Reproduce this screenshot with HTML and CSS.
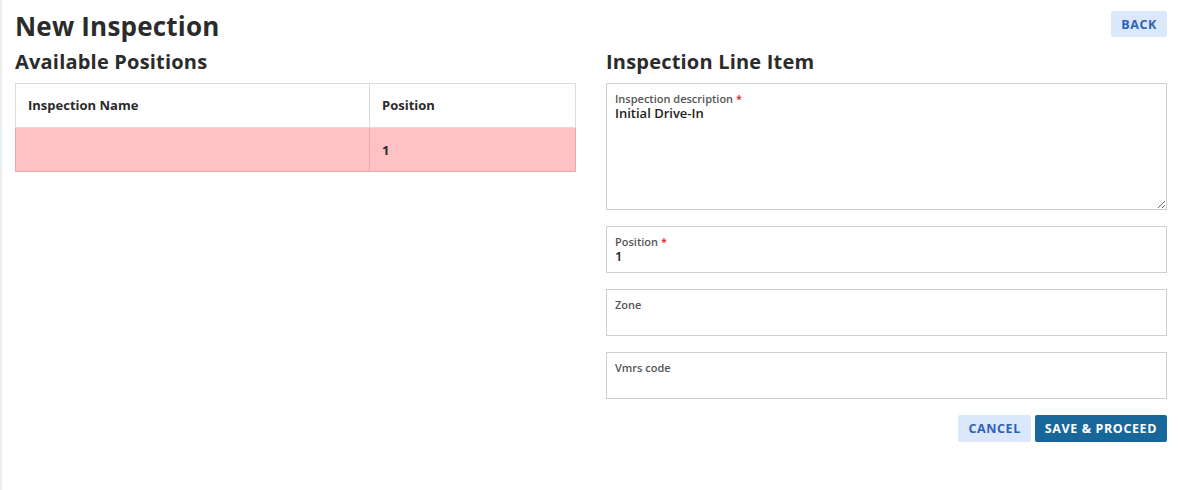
FILE: index.html
```html
<!DOCTYPE html>
<html lang="en">

<head>
    <title>New Inspection</title>
    <link rel="stylesheet" href="styles.css">
</head>

<body>
    <div class="page">
        <div class="page-header">
            <h1>New Inspection</h1>
            <button class="btn btn-light">Back</button>
        </div>

        <div class="columns">
            <div class="column">
                <h2>Available Positions</h2>
                <table id="positions-table">
                    <thead>
                        <tr>
                            <th>Inspection Name</th>
                            <th>Position</th>
                        </tr>
                    </thead>
                    <tbody>
                        <tr class="current">
                            <td></td>
                            <td>1</td>
                        </tr>
                    </tbody>
                </table>
            </div>

            <div class="column">
                <h2>Inspection Line Item</h2>
                <div class="field field-area">
                    <label>Inspection description <span class="req">*</span></label>
                    <div class="value">Initial Drive-In</div>
                </div>
                <div class="field">
                    <label>Position <span class="req">*</span></label>
                    <div class="value">1</div>
                </div>
                <div class="field">
                    <label>Zone</label>
                    <div class="value"></div>
                </div>
                <div class="field">
                    <label>Vmrs code</label>
                    <div class="value"></div>
                </div>
                <div class="actions">
                    <button class="btn btn-light">Cancel</button>
                    <button class="btn btn-primary">Save &amp; Proceed</button>
                </div>
            </div>
        </div>
    </div>
</body>

</html>
```

FILE: styles.css
```css
* {
    margin: 0;
    padding: 0;
    box-sizing: border-box;
}

body {
    font-family: "Open Sans", "Liberation Sans", sans-serif;
    color: #2b2b2b;
    background: #fff;
}

.page {
    min-height: 490px;
    border-left: 2px solid #ececec;
    padding: 10px 13px 0 13px;
}

.page-header {
    display: flex;
    justify-content: space-between;
    align-items: flex-start;
    height: 38px;
}

h1 {
    font-size: 26px;
    font-weight: 700;
    line-height: 32px;
    letter-spacing: 0.2px;
}

h2 {
    font-size: 20px;
    font-weight: 700;
    line-height: 28px;
    margin-bottom: 7px;
    letter-spacing: 0.2px;
}

.columns {
    display: grid;
    grid-template-columns: 561px 561px;
    gap: 30px;
}

#positions-table {
    width: 100%;
    border-collapse: collapse;
    font-size: 13px;
}

#positions-table th,
#positions-table td {
    text-align: left;
    padding: 0 12px;
    height: 44px;
    border: 1px solid #dcdcdc;
}

#positions-table th {
    font-weight: 700;
    padding-bottom: 2px;
}

#positions-table th:first-child {
    width: 354px;
}

#positions-table tr.current td {
    background: #ffc2c4;
    border-color: #f0a6a9;
    font-weight: 700;
}

.field {
    border: 1px solid #cfcfcf;
    height: 47px;
    padding: 8px 8px 0 8px;
    margin-bottom: 16px;
}

.field-area {
    height: 127px;
    resize: vertical;
    overflow: hidden;
}

.field label {
    display: block;
    font-size: 11px;
    font-weight: 600;
    color: #555;
    line-height: 13px;
}

.req {
    color: #e0201a;
}

.field .value {
    font-size: 13px;
    font-weight: 600;
    color: #222;
    line-height: 17px;
}

.actions {
    display: flex;
    justify-content: flex-end;
    gap: 4px;
}

.btn {
    font-family: inherit;
    font-size: 12.5px;
    font-weight: 700;
    text-transform: uppercase;
    letter-spacing: 0.6px;
    border: none;
    border-radius: 2px;
    height: 27px;
    padding: 0 10px;
}

.btn-light {
    background: #dbe7fb;
    color: #2e62b6;
}

.page-header .btn {
    height: 26px;
    margin-top: 1px;
}

.btn-primary {
    background: #17679b;
    color: #fff;
}
```
